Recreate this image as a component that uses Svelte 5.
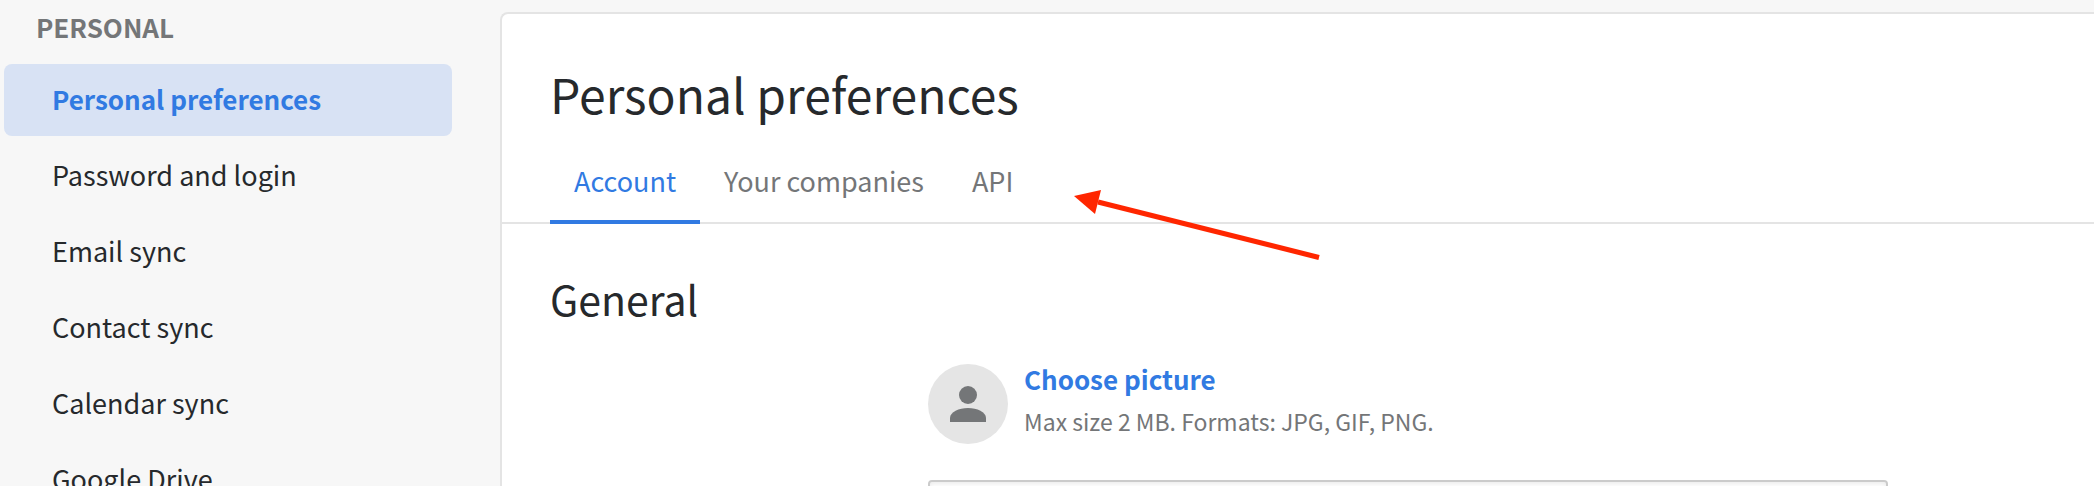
<script>
  const menu = [
    "Personal preferences",
    "Password and login",
    "Email sync",
    "Contact sync",
    "Calendar sync",
    "Google Drive",
  ];
  const tabs = ["Account", "Your companies", "API"];

  let activeItem = $state("Personal preferences");
  let activeTab = $state("Account");
</script>

<div class="page">
  <aside class="sidebar">
    <h2 class="sidebar-title">Personal</h2>
    <nav class="menu" aria-label="Settings">
      {#each menu as item}
        <a
          href="#settings"
          class="menu-item"
          class:active={item === activeItem}
          onclick={() => (activeItem = item)}>{item}</a>
      {/each}
    </nav>
  </aside>

  <main class="panel">
    <h1>Personal preferences</h1>

    <div class="tabs" role="tablist">
      {#each tabs as tab}
        <button
          class="tab"
          class:active={tab === activeTab}
          role="tab"
          aria-selected={tab === activeTab}
          onclick={() => (activeTab = tab)}>{tab}</button>
      {/each}
      <svg class="arrow" width="248" height="72" viewBox="0 0 248 72" aria-hidden="true">
        <path d="M24 12 L245 67.5" stroke="#ff2600" stroke-width="5" />
        <path d="M0 6 L27 0 L21 24 Z" fill="#ff2600" />
      </svg>
    </div>

    <section class="section">
      <h2>General</h2>
      <div class="form">
        <div class="picture">
          <div class="avatar">
            <svg width="36" height="36" viewBox="0 0 36 36" aria-hidden="true">
              <circle cx="18" cy="9" r="9" />
              <path d="M0 36 V32 C0 26 9 22 18 22 C27 22 36 26 36 32 V36 Z" />
            </svg>
          </div>
          <div class="picture-text">
            <button class="choose">Choose picture</button>
            <p class="hint">Max size 2 MB. Formats: JPG, GIF, PNG.</p>
          </div>
        </div>
        <input class="field" type="text" aria-label="Name" />
      </div>
    </section>
  </main>
</div>

<style>
  :global(body) {
    background: #f7f7f7;
  }

  .page {
    display: flex;
    height: 100vh;
    overflow: hidden;
    box-sizing: border-box;
    padding-top: 8px;
    font-family: "Source Sans Pro", "Noto Sans CJK JP", sans-serif;
    font-size: 27px;
    line-height: 38px;
    color: #26292c;
  }

  h1,
  h2,
  p {
    margin: 0;
    font-weight: 400;
  }

  button {
    font: inherit;
    background: none;
    border: 0;
    padding: 0;
    cursor: pointer;
  }

  .sidebar {
    flex: 0 0 452px;
    box-sizing: border-box;
    padding-left: 4px;
    margin-right: 48px;
  }

  .sidebar-title {
    padding-left: 32px;
    margin-bottom: 18px;
    font-size: 26px;
    font-weight: 700;
    text-transform: uppercase;
    color: #747678;
  }

  .menu {
    display: flex;
    flex-direction: column;
    gap: 4px;
  }

  .menu-item {
    padding: 0 48px 2px;
    line-height: 70px;
    border-radius: 8px;
    color: inherit;
    text-decoration: none;
  }

  .menu-item.active {
    background: #d8e2f4;
    color: #317ae2;
    font-size: 26px;
    font-weight: 700;
  }

  .panel {
    flex: 1;
    min-width: 0;
    margin-top: 4px;
    padding-top: 48px;
    background: #fff;
    border: 2px solid #e4e4e4;
    border-width: 2px 0 0 2px;
    border-top-left-radius: 8px;
  }

  h1 {
    padding: 0 48px;
    margin-bottom: 14px;
    font-size: 48px;
    line-height: 62px;
  }

  .tabs {
    position: relative;
    display: flex;
    padding: 0 48px;
    border-bottom: 2px solid #e4e4e4;
  }

  .tab {
    padding: 24px 24px 20px;
    margin-bottom: -2px;
    border-bottom: 4px solid transparent;
    color: #747678;
  }

  .tab.active {
    border-color: #317ae2;
    color: #317ae2;
  }

  .arrow {
    position: absolute;
    left: 572px;
    top: 52px;
    pointer-events: none;
  }

  .section {
    padding: 50px 48px;
  }

  .section h2 {
    margin-bottom: 38px;
    font-size: 41px;
    line-height: 48px;
  }

  .form {
    max-width: 960px;
    margin-left: 378px;
  }

  .picture {
    display: flex;
    align-items: center;
    gap: 16px;
    margin-bottom: 32px;
  }

  .avatar {
    display: flex;
    align-items: center;
    justify-content: center;
    width: 80px;
    height: 80px;
    border-radius: 50%;
    background: #e5e5e5;
    fill: #747678;
  }

  .picture-text {
    display: flex;
    flex-direction: column;
    align-items: flex-start;
    gap: 4px;
    padding-bottom: 8px;
  }

  .choose {
    font-size: 26px;
    font-weight: 700;
    color: #317ae2;
  }

  .hint {
    font-size: 23px;
    color: #747678;
  }

  .field {
    display: block;
    box-sizing: border-box;
    width: 100%;
    height: 64px;
    padding: 0 16px;
    font: inherit;
    border: 2px solid #cbcbcb;
    border-radius: 4px;
    box-shadow: inset 0 2px 4px rgba(0, 0, 0, 0.08);
  }
</style>
